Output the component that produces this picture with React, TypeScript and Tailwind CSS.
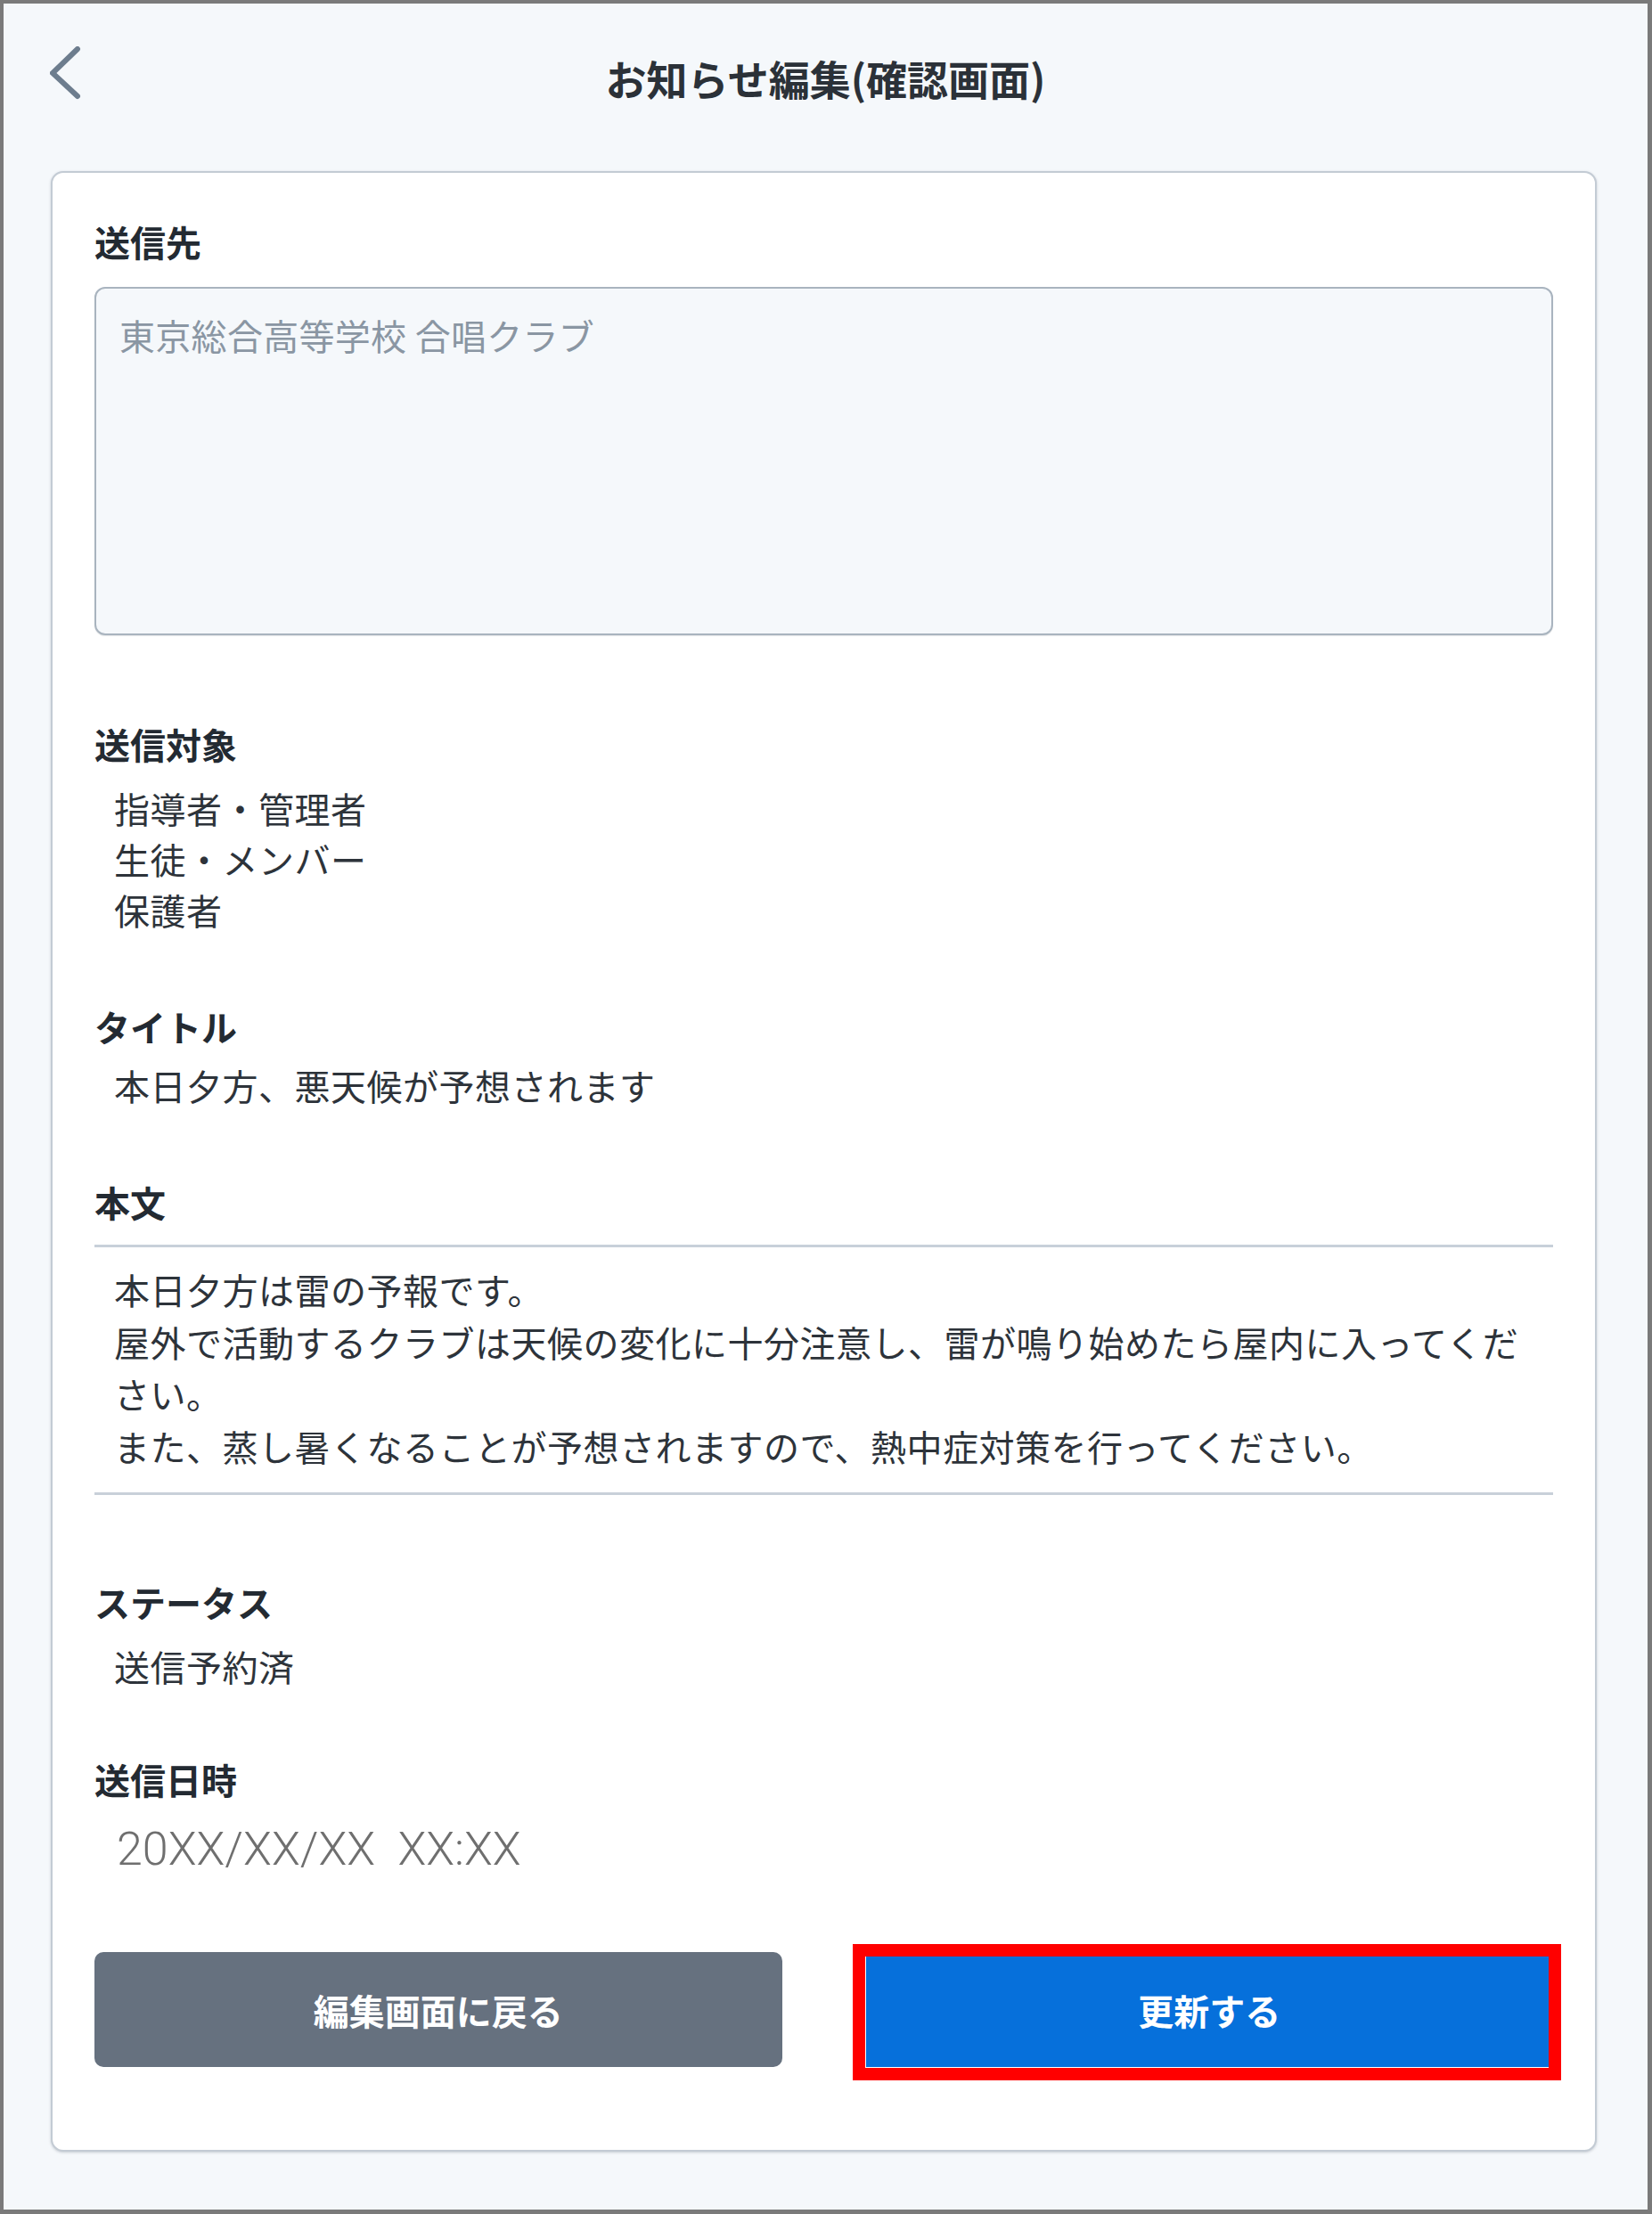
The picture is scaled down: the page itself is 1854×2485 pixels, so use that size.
import React from "react";

const targets = ["指導者・管理者", "生徒・メンバー", "保護者"];

const bodyLines = [
  "本日夕方は雷の予報です。",
  "屋外で活動するクラブは天候の変化に十分注意し、雷が鳴り始めたら屋内に入ってくだ",
  "さい。",
  "また、蒸し暑くなることが予想されますので、熱中症対策を行ってください。",
];

function Label({ children, className = "" }: { children: React.ReactNode; className?: string }) {
  return <div className={`text-[40px] font-bold leading-[60px] text-[#232a32] ${className}`}>{children}</div>;
}

function Value({ children, className = "" }: { children: React.ReactNode; className?: string }) {
  return (
    <div className={`pl-[22px] text-[40px] leading-[57px] tracking-[0.5px] text-[#2d333a] ${className}`}>{children}</div>
  );
}

export default function App() {
  return (
    <div className="flex h-[2485px] w-[1854px] flex-col border-b-[5px] border-l-4 border-r-[5px] border-t-4 border-[#7a7a7a] bg-[#f5f8fb] font-['Noto_Sans_CJK_JP','Noto_Sans',sans-serif]">
      {/* Header */}
      <div className="grid h-[166px] grid-cols-[1fr_auto_1fr] items-center">
        <div className="pl-[52px]">
          <svg width="36" height="70" viewBox="0 0 36 70" fill="none">
            <polyline
              points="31,3 3,30 31,56"
              stroke="#6d7d8e"
              strokeWidth="6"
              strokeLinecap="round"
              strokeLinejoin="miter"
            />
          </svg>
        </div>
        <h1 className="text-[46px] font-bold leading-none text-[#2b3138]">お知らせ編集(確認画面)</h1>
        <div />
      </div>

      {/* Card */}
      <div className="ml-[53px] mt-[22px] h-[2223px] w-[1735px] rounded-[14px] border-2 border-[#c3cbd4] bg-white px-[47px] pt-[47px] shadow-[0_1px_3px_rgba(60,72,88,0.25)]">
        <Label>送信先</Label>
        <div className="mt-[21px] h-[391px] rounded-[12px] border-2 border-[#a9b4bf] bg-[#f5f8fb] px-[26px] pt-[22px] shadow-[0_1px_1px_rgba(60,72,88,0.15)]">
          <div className="text-[40px] leading-[60px] tracking-[0.3px] text-[#8a96a3]">東京総合高等学校 合唱クラブ</div>
        </div>

        <Label className="mt-[92px]">送信対象</Label>
        <div className="mt-[14px]">
          {targets.map((t) => (
            <Value key={t}>{t}</Value>
          ))}
        </div>

        <Label className="mt-[72px]">タイトル</Label>
        <Value className="mt-[8px]">本日夕方、悪天候が予想されます</Value>

        <Label className="mt-[72px]">本文</Label>
        <div className="mt-[18px] h-[3px] bg-[#c8d0d9]" />
        <div className="mt-[18px] pl-[22px] text-[40px] leading-[58.5px] tracking-[0.5px] text-[#2d333a]">
          {bodyLines.map((l, i) => (
            <div key={i} className="whitespace-nowrap">
              {l}
            </div>
          ))}
        </div>
        <div className="mt-[23px] h-[3px] bg-[#c8d0d9]" />

        <Label className="mt-[90px]">ステータス</Label>
        <Value className="mt-[14px]">送信予約済</Value>

        <Label className="mt-[68px]">送信日時</Label>
        <div className="mt-[19px] whitespace-pre pl-[25px] font-['Roboto','Noto_Sans',sans-serif] text-[52px] font-light leading-[60px] text-[#6f6f6f]">
          {"20XX/XX/XX  XX:XX"}
        </div>

        {/* Buttons */}
        <div className="mt-[85px] grid h-[129px] grid-cols-2 gap-[94px]">
          <button className="rounded-[10px] bg-[#66717f] text-[40px] font-bold text-white">編集画面に戻る</button>
          <div className="relative">
            <button className="h-full w-full bg-[#0670db] text-[40px] font-bold text-white">更新する</button>
            <div className="pointer-events-none absolute bottom-[-15px] left-[-15px] right-[-9px] top-[-9px] border-[14px] border-[#ff0000]" />
          </div>
        </div>
      </div>
    </div>
  );
}
